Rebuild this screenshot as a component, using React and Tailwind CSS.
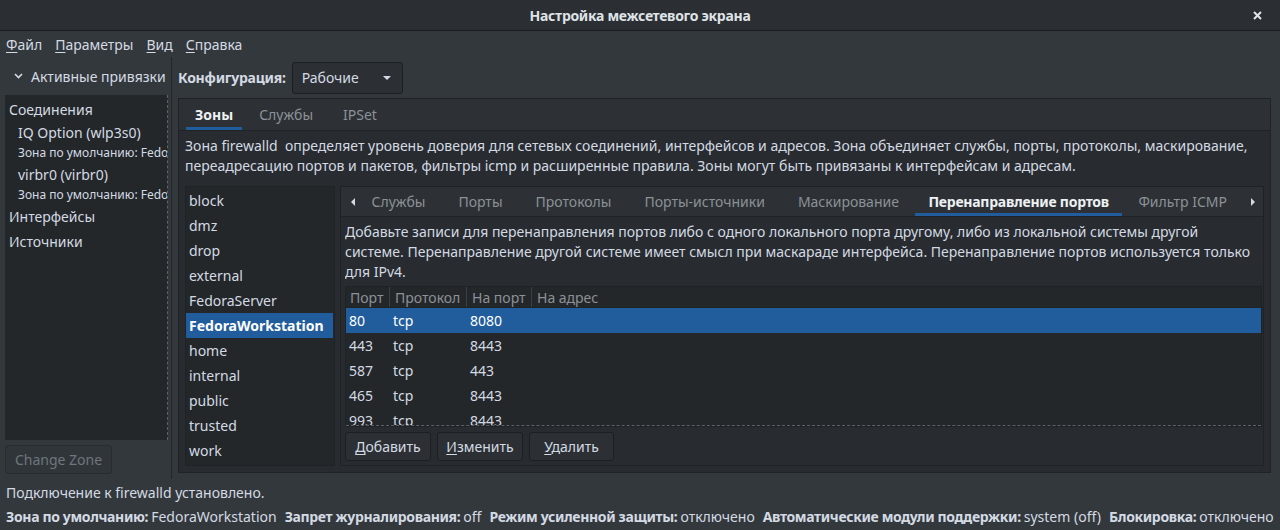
import React from "react";

const FONT = { fontFamily: '"Noto Sans", "Open Sans", "DejaVu Sans", sans-serif' };

const ZONES = [
  "block",
  "dmz",
  "drop",
  "external",
  "FedoraServer",
  "FedoraWorkstation",
  "home",
  "internal",
  "public",
  "trusted",
  "work",
];

const FORWARDS = [
  ["80", "tcp", "8080", ""],
  ["443", "tcp", "8443", ""],
  ["587", "tcp", "443", ""],
  ["465", "tcp", "8443", ""],
  ["993", "tcp", "8443", ""],
];

const INNER_TABS = [
  "Службы",
  "Порты",
  "Протоколы",
  "Порты-источники",
  "Маскирование",
  "Перенаправление портов",
  "Фильтр ICMP",
];

function Mnemonic({ text }) {
  return (
    <span>
      <span className="underline underline-offset-2">{text[0]}</span>
      {text.slice(1)}
    </span>
  );
}

function Tri({ dir }) {
  const pts = {
    down: "0,0 8,0 4,4",
    left: "4,0 4,8 0,4",
    right: "0,0 0,8 4,4",
  }[dir];
  const size = dir === "down" ? [8, 4] : [4, 8];
  return (
    <svg width={size[0]} height={size[1]} viewBox={`0 0 ${size[0]} ${size[1]}`}>
      <polygon points={pts} fill="#d3dae3" />
    </svg>
  );
}

function Button({ children, disabled, className = "" }) {
  return (
    <div
      className={
        "flex items-center justify-center h-[29px] rounded-[3px] border " +
        (disabled
          ? "text-[#6f767c] bg-[#30353a] border-[#282c30] "
          : "text-[#d3dae3] bg-[#2c3034] border-[#1c1f22] ") +
        className
      }
    >
      {children}
    </div>
  );
}

function LeftPanel() {
  return (
    <div className="w-[172px] shrink-0 flex flex-col border-r border-[#232629] pb-[4px]">
      <div className="h-[38px] flex items-center gap-[8px] pl-[14px]">
        <svg width="9" height="6" viewBox="0 0 9 6">
          <path d="M1 1 L4.5 4.5 L8 1" stroke="#d3dae3" strokeWidth="1.6" fill="none" />
        </svg>
        <span>Активные привязки</span>
      </div>
      <div className="ml-[5px] w-[163px] h-[345px] bg-[#24272a] border-r border-dashed border-[#5c6268] overflow-hidden">
        <div className="pl-[4px] pt-[2px] whitespace-nowrap">
          <div className="h-[25px] leading-[25px]">Соединения</div>
          <div className="pl-[9px] leading-[22px] h-[22px]">IQ Option (wlp3s0)</div>
          <div className="pl-[9px] text-[12px] leading-[18px] h-[18px]">Зона по умолчанию: FedoraWorkstation</div>
          <div className="pl-[9px] leading-[22px] h-[24px] pt-[2px]">virbr0 (virbr0)</div>
          <div className="pl-[9px] text-[12px] leading-[18px] h-[18px]">Зона по умолчанию: FedoraWorkstation</div>
          <div className="h-[25px] leading-[25px]">Интерфейсы</div>
          <div className="h-[25px] leading-[25px]">Источники</div>
        </div>
      </div>
      <div className="pl-[5px] pt-[5px]">
        <Button disabled className="w-[107px]">Change Zone</Button>
      </div>
    </div>
  );
}

function ZoneList() {
  return (
    <div className="w-[150px] shrink-0 bg-[#24272a] border border-[#202326] pt-[1px]">
      {ZONES.map((z) => {
        const sel = z === "FedoraWorkstation";
        return (
          <div
            key={z}
            className={
              "h-[25px] leading-[25px] pl-[3px] mr-[1px] " +
              (sel ? "bg-[#215d9c] text-white font-bold" : "")
            }
          >
            {z}
          </div>
        );
      })}
    </div>
  );
}

function ForwardTable() {
  return (
    <div className="bg-[#24272a] border border-[#202326] overflow-hidden flex flex-col">
      <div className="h-[21px] flex text-[#8b9197] border-b border-[#202326]">
        <div className="w-[44px] pl-[4px] border-r border-[#3a3f44]">Порт</div>
        <div className="w-[77px] pl-[5px] border-r border-[#3a3f44]">Протокол</div>
        <div className="w-[65px] pl-[5px] border-r border-[#3a3f44]">На порт</div>
        <div className="pl-[5px]">На адрес</div>
      </div>
      <div className="h-[118px] overflow-hidden border-b border-dashed border-[#5c6268]">
        {FORWARDS.map((r, i) => (
          <div
            key={i}
            className={"h-[25px] leading-[25px] flex " + (i === 0 ? "bg-[#215d9c] text-white" : "")}
          >
            <div className="w-[44px] pl-[3px]">{r[0]}</div>
            <div className="w-[77px] pl-[3px]">{r[1]}</div>
            <div className="w-[65px] pl-[3px]">{r[2]}</div>
            <div className="pl-[3px]">{r[3]}</div>
          </div>
        ))}
      </div>
    </div>
  );
}

function InnerNotebook() {
  return (
    <div className="flex-1 min-w-0 flex flex-col border border-[#202326] bg-[#282b2f]">
      <div className="h-[30px] flex items-stretch bg-[#2d3135] border-b border-[#202326] whitespace-nowrap">
        <div className="w-[14px] shrink-0 flex items-center justify-end">
          <Tri dir="left" />
        </div>
        <div className="flex-1 min-w-0 flex items-stretch overflow-hidden">
          {INNER_TABS.map((t) => {
            const active = t === "Перенаправление портов";
            return (
              <div
                key={t}
                className={
                  "flex items-center border-b-[3px] " +
                  (active
                    ? "border-[#215d9c] text-[#eef1f4] font-bold tracking-[-0.25px] px-[13px]"
                    : "border-transparent text-[#8b9197] px-[16.5px]")
                }
              >
                <span className="pt-[3px]">{t}</span>
              </div>
            );
          })}
        </div>
        <div className="w-[20px] shrink-0 flex items-center justify-center">
          <Tri dir="right" />
        </div>
      </div>
      <div className="flex-1 flex flex-col pl-[4px] pr-[1px] pt-[5px] pb-[4px]">
        <p className="leading-[20px] whitespace-nowrap overflow-hidden">
          Добавьте записи для перенаправления портов либо с одного локального порта другому, либо из локальной системы другой
          <br />
          системе. Перенаправление другой системе имеет смысл при маскараде интерфейса. Перенаправление портов используется только
          <br />
          для IPv4.
        </p>
        <div className="mt-[4px] flex flex-col">
          <ForwardTable />
        </div>
        <div className="flex gap-[6px] mt-[5px]">
          <Button className="w-[86px]">
            <Mnemonic text="Добавить" />
          </Button>
          <Button className="w-[86px]">
            <Mnemonic text="Изменить" />
          </Button>
          <Button className="w-[85px]">
            <Mnemonic text="Удалить" />
          </Button>
        </div>
      </div>
    </div>
  );
}

function RightPanel() {
  return (
    <div className="flex-1 min-w-0 flex flex-col pl-[6px] pr-[9px] pb-[6px]">
      <div className="h-[41px] flex items-center gap-[6px]">
        <span className="font-bold tracking-[-0.25px]">Конфигурация:</span>
        <div className="w-[111px] h-[32px] rounded-[3px] border border-[#1c1f22] bg-[#2c3034] flex items-center justify-between pl-[9px] pr-[11px]">
          <span>Рабочие</span>
          <Tri dir="down" />
        </div>
      </div>
      <div className="flex-1 min-w-0 flex flex-col border border-[#202326] bg-[#282b2f]">
        <div className="h-[32px] flex items-stretch bg-[#2d3135] border-b border-[#202326] pl-[7px] gap-[4px]">
          {["Зоны", "Службы", "IPSet"].map((t, i) => (
            <div
              key={t}
              className={
                "flex items-center border-b-[3px] " +
                (i === 0
                  ? "border-[#215d9c] text-[#eef1f4] font-bold px-[9px]"
                  : "border-transparent text-[#8b9197] px-[13px]")
              }
            >
              <span className="pt-[3px]">{t}</span>
            </div>
          ))}
        </div>
        <div className="flex-1 flex flex-col px-[6px] pt-[5px] pb-[6px]">
          <p className="leading-[20px] whitespace-nowrap overflow-hidden">
            Зона firewalld&nbsp; определяет уровень доверия для сетевых соединений, интерфейсов и адресов. Зона объединяет службы, порты, протоколы, маскирование,
            <br />
            переадресацию портов и пакетов, фильтры icmp и расширенные правила. Зоны могут быть привязаны к интерфейсам и адресам.
          </p>
          <div className="flex-1 flex gap-[5px] mt-[10px]">
            <ZoneList />
            <InnerNotebook />
          </div>
        </div>
      </div>
    </div>
  );
}

function StatusItem({ label, value }) {
  return (
    <span className="whitespace-nowrap">
      <span className="font-bold tracking-[-0.35px]">{label}</span>
      <span className="ml-[3px]">{value}</span>
    </span>
  );
}

export default function App() {
  return (
    <div
      className="w-[1280px] h-[530px] overflow-hidden bg-[#33383c] text-[#d3dae3] text-[14px] flex flex-col"
      style={FONT}
    >
      <div className="h-[31px] shrink-0 grid grid-cols-[1fr_auto_1fr] items-center bg-[#2b2e32] border-b border-[#1b1d20]">
        <div />
        <div className="font-bold text-[#dfe3e7] tracking-[-0.3px]">Настройка межсетевого экрана</div>
        <div className="flex justify-end pr-[18px]">
          <svg width="9" height="9" viewBox="0 0 9 9">
            <path d="M1 1 L8 8 M8 1 L1 8" stroke="#e0e4e8" strokeWidth="2" />
          </svg>
        </div>
      </div>
      <div className="h-[26px] shrink-0 flex items-center gap-[13px] pl-[6px] bg-[#33383c]">
        <Mnemonic text="Файл" />
        <Mnemonic text="Параметры" />
        <Mnemonic text="Вид" />
        <Mnemonic text="Справка" />
      </div>
      <div className="h-[422px] shrink-0 flex">
        <LeftPanel />
        <RightPanel />
      </div>
      <div className="flex-1 flex flex-col pl-[6px]">
        <div className="h-[25px] leading-[25px] pt-[1px]">Подключение к firewalld установлено.</div>
        <div className="h-[24px] leading-[24px] pt-[1px] flex gap-[8px] whitespace-nowrap">
          <StatusItem label="Зона по умолчанию:" value="FedoraWorkstation" />
          <StatusItem label="Запрет журналирования:" value="off" />
          <StatusItem label="Режим усиленной защиты:" value="отключено" />
          <StatusItem label="Автоматические модули поддержки:" value="system (off)" />
          <StatusItem label="Блокировка:" value="отключено" />
        </div>
      </div>
    </div>
  );
}
